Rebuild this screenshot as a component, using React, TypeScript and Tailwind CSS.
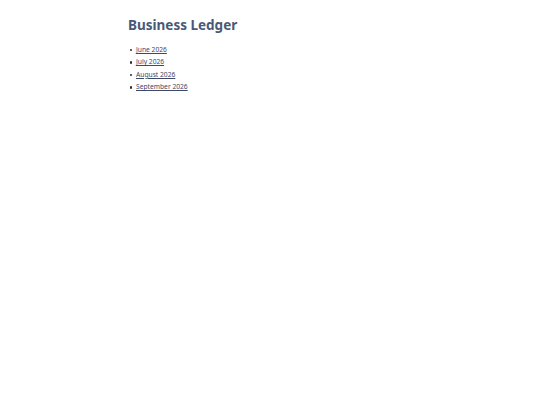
export default function App() {
  const months = ['June 2026', 'July 2026', 'August 2026', 'September 2026'];

  return (
    <div className="min-h-screen bg-white font-['Noto_Sans',sans-serif]">
      <div className="mx-auto w-[284px] pt-[15px]">
        <h1 className="text-[13.5px] font-bold leading-[20px] text-[#4a5878]">Business Ledger</h1>
        <ul className="mt-[9px] text-[6.7px] leading-[12.4px] text-[#3b4a6b]">
          {months.map((m) => (
            <li key={m} className="flex items-center">
              <span className="ml-[1.5px] mr-[4px] h-[2.5px] w-[2.5px] rounded-full bg-[#2a2a2a]" />
              <a href="#" className="underline">
                {m}
              </a>
            </li>
          ))}
        </ul>
      </div>
    </div>
  );
}
